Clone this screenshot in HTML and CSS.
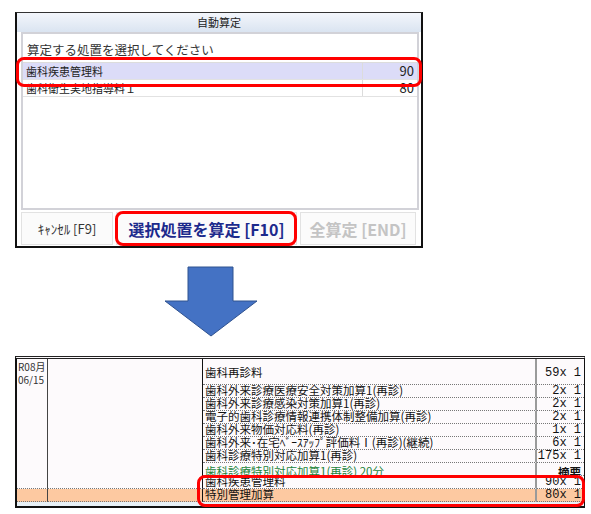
FILE: index.html
```html
<!DOCTYPE html>
<html lang="ja">
<head>
    <meta charset="UTF-8">
    <title>自動算定</title>
    <link rel="stylesheet" href="styles.css">
</head>
<body>
<div class="page">

    <!-- 自動算定ダイアログ -->
    <div class="dialog">
        <div class="dialog-title">自動算定</div>
        <div class="panel">
            <div class="panel-head">算定する処置を選択してください</div>
            <div class="pick-list">
                <div class="pick-row selected">
                    <span class="pick-name">歯科疾患管理料</span>
                    <span class="pick-pts">90</span>
                </div>
                <div class="pick-row">
                    <span class="pick-name">歯科衛生実地指導料１</span>
                    <span class="pick-pts">80</span>
                </div>
            </div>
        </div>
        <div class="btn-bar">
            <button class="btn btn-cancel">ｷｬﾝｾﾙ [F9]</button>
            <button class="btn btn-main">選択処置を算定 [F10]</button>
            <button class="btn btn-all" disabled>全算定 [END]</button>
        </div>
        <div class="mark mark-list"></div>
        <div class="mark mark-btn"></div>
    </div>

    <svg class="arrow" width="591" height="108" viewBox="0 248 591 108">
        <polygon points="188,267 233,267 233,301 257,301 211,336 165,301 188,301"
                 fill="#4472c4" stroke="#2f528f" stroke-width="1"/>
    </svg>

    <!-- 算定後の明細 -->
    <div class="sheet">
        <div class="date">R08月<br>06/15</div>
        <div class="blank"></div>

        <div class="item first">歯科再診料</div>
        <div class="num first">59x 1</div>

        <div class="item">歯科外来診療医療安全対策加算1(再診)</div>
        <div class="num">2x 1</div>
        <div class="item">歯科外来診療感染対策加算1(再診)</div>
        <div class="num">2x 1</div>
        <div class="item">電子的歯科診療情報連携体制整備加算(再診)</div>
        <div class="num">2x 1</div>
        <div class="item">歯科外来物価対応料(再診)</div>
        <div class="num">1x 1</div>
        <div class="item">歯科外来･在宅ﾍﾞｰｽｱｯﾌﾟ評価料Ⅰ(再診)(継続)</div>
        <div class="num">6x 1</div>
        <div class="item">歯科診療特別対応加算1(再診)</div>
        <div class="num">175x 1</div>
        <div class="item clip green">歯科診療特別対応加算1(再診) 20分</div>
        <div class="num clip memo">摘要</div>
        <div class="item">歯科疾患管理料</div>
        <div class="num">90x 1</div>

        <div class="date hot"></div>
        <div class="blank hot"></div>
        <div class="item hot">特別管理加算</div>
        <div class="num hot">80x 1</div>

        <div class="next-row"></div>

        <div class="mark mark-sheet"></div>
    </div>

</div>
</body>
</html>
```

FILE: styles.css
```css
body {
    margin: 0;
    background: #fff;
    font-family: "Noto Sans CJK JP", sans-serif;
}
.page {
    padding-top: 12px;
}

/* ダイアログ */
.dialog {
    position: relative;
    width: 404px;
    margin-left: 15px;
    border: 2px solid #111;
    border-top: 1px solid #333;
    background: #fff;
}
.dialog-title {
    height: 19px;
    line-height: 19px;
    text-align: center;
    font-size: 11px;
    color: #222;
    background: linear-gradient(#f3f6fb, #dae4f1);
}
.panel {
    width: 398px;
    height: 178px;
    margin-left: 4px;
    box-sizing: border-box;
    border: 2px solid #d2d2d8;
}
.panel-head {
    height: 28px;
    box-sizing: border-box;
    padding: 6px 0 0 4px;
    font-size: 12.5px;
    line-height: 20px;
    color: #333;
}
.pick-list {
    border-top: 1px solid #dcdcdc;
}
.pick-row {
    display: flex;
    height: 17px;
    box-sizing: border-box;
    border-bottom: 1px solid #e2e2e2;
    font-size: 11px;
    line-height: 16px;
    color: #222;
}
.pick-row.selected {
    background: #dcdcf8;
}
.pick-name {
    flex: 1;
    padding-left: 3px;
    white-space: nowrap;
}
.pick-pts {
    width: 55px;
    box-sizing: border-box;
    border-left: 1px solid #dcdcdc;
    padding-right: 3px;
    text-align: right;
    font-size: 13px;
}

.btn-bar {
    display: flex;
    gap: 3px;
    height: 36px;
    padding: 2px 0 1px 4px;
    box-sizing: border-box;
}
.btn {
    height: 33px;
    border: 1px solid #e2e2e2;
    background: #fbfbfb;
    font-family: inherit;
    padding: 0;
    white-space: nowrap;
}
.btn-cancel {
    width: 92px;
    font-size: 13px;
    color: #333;
}
.btn-main {
    width: 181px;
    font-size: 16px;
    font-weight: bold;
    color: #1c2a8c;
}
.btn-all {
    width: 116px;
    font-size: 16px;
    font-weight: bold;
    color: #c4c4c4;
}

/* 赤枠 */
.mark {
    position: absolute;
    box-sizing: border-box;
    border: 3px solid #f00;
    border-radius: 8px;
}
.mark-list {
    left: -1px;
    top: 44px;
    width: 406px;
    height: 30px;
}
.mark-btn {
    left: 98px;
    top: 198px;
    width: 182px;
    height: 35px;
}

.arrow {
    display: block;
}

/* 明細 */
.sheet {
    position: relative;
    display: grid;
    grid-template-columns: 31px 155px 334px 1fr;
    grid-template-rows: 26px repeat(9, 13px) 4px;
    width: 570px;
    margin-left: 15px;
    box-sizing: border-box;
    border-left: 2px solid #111;
    border-right: 1px solid #111;
    border-top: 3px double #222;
    border-bottom: 2px solid #111;
    background: #fdfafc;
    color: #111;
}
.sheet > div {
    box-sizing: border-box;
}
.date {
    grid-column: 1;
    grid-row: 1 / span 9;
    border-right: 1px solid #444;
    border-bottom: 1px dotted #777;
    padding: 1px 0 0 1px;
    font-size: 10px;
    line-height: 13px;
    color: #333;
    white-space: nowrap;
}
.blank {
    grid-column: 2;
    grid-row: 1 / span 9;
    border-right: 1px solid #111;
    border-bottom: 1px dotted #777;
}
.date.hot,
.blank.hot {
    grid-row: 10;
}
.item {
    grid-column: 3;
    border-right: 2px solid #9a9a9a;
    border-bottom: 1px dotted #777;
    padding-left: 2px;
    font-size: 11.5px;
    line-height: 11px;
    white-space: nowrap;
}
.num {
    grid-column: 4;
    border-bottom: 1px dotted #777;
    padding-right: 3px;
    text-align: right;
    font-family: "Liberation Mono", monospace;
    font-size: 12px;
    line-height: 12px;
    white-space: nowrap;
}
.item.first,
.num.first {
    padding-top: 8px;
}
/* 下の行に隠れて下半分が見えない行 */
.clip {
    padding-top: 3px;
    overflow: hidden;
}
.green {
    color: #23843a;
}
.memo {
    font-family: "Noto Sans CJK JP", sans-serif;
    font-size: 11.5px;
    font-weight: bold;
}
.hot {
    background: #fdc9a1;
}
.next-row {
    grid-column: 1 / -1;
    background: #e8f1f7;
}
.mark-sheet {
    left: 180px;
    top: 116px;
    width: 388px;
    height: 32px;
}
```
